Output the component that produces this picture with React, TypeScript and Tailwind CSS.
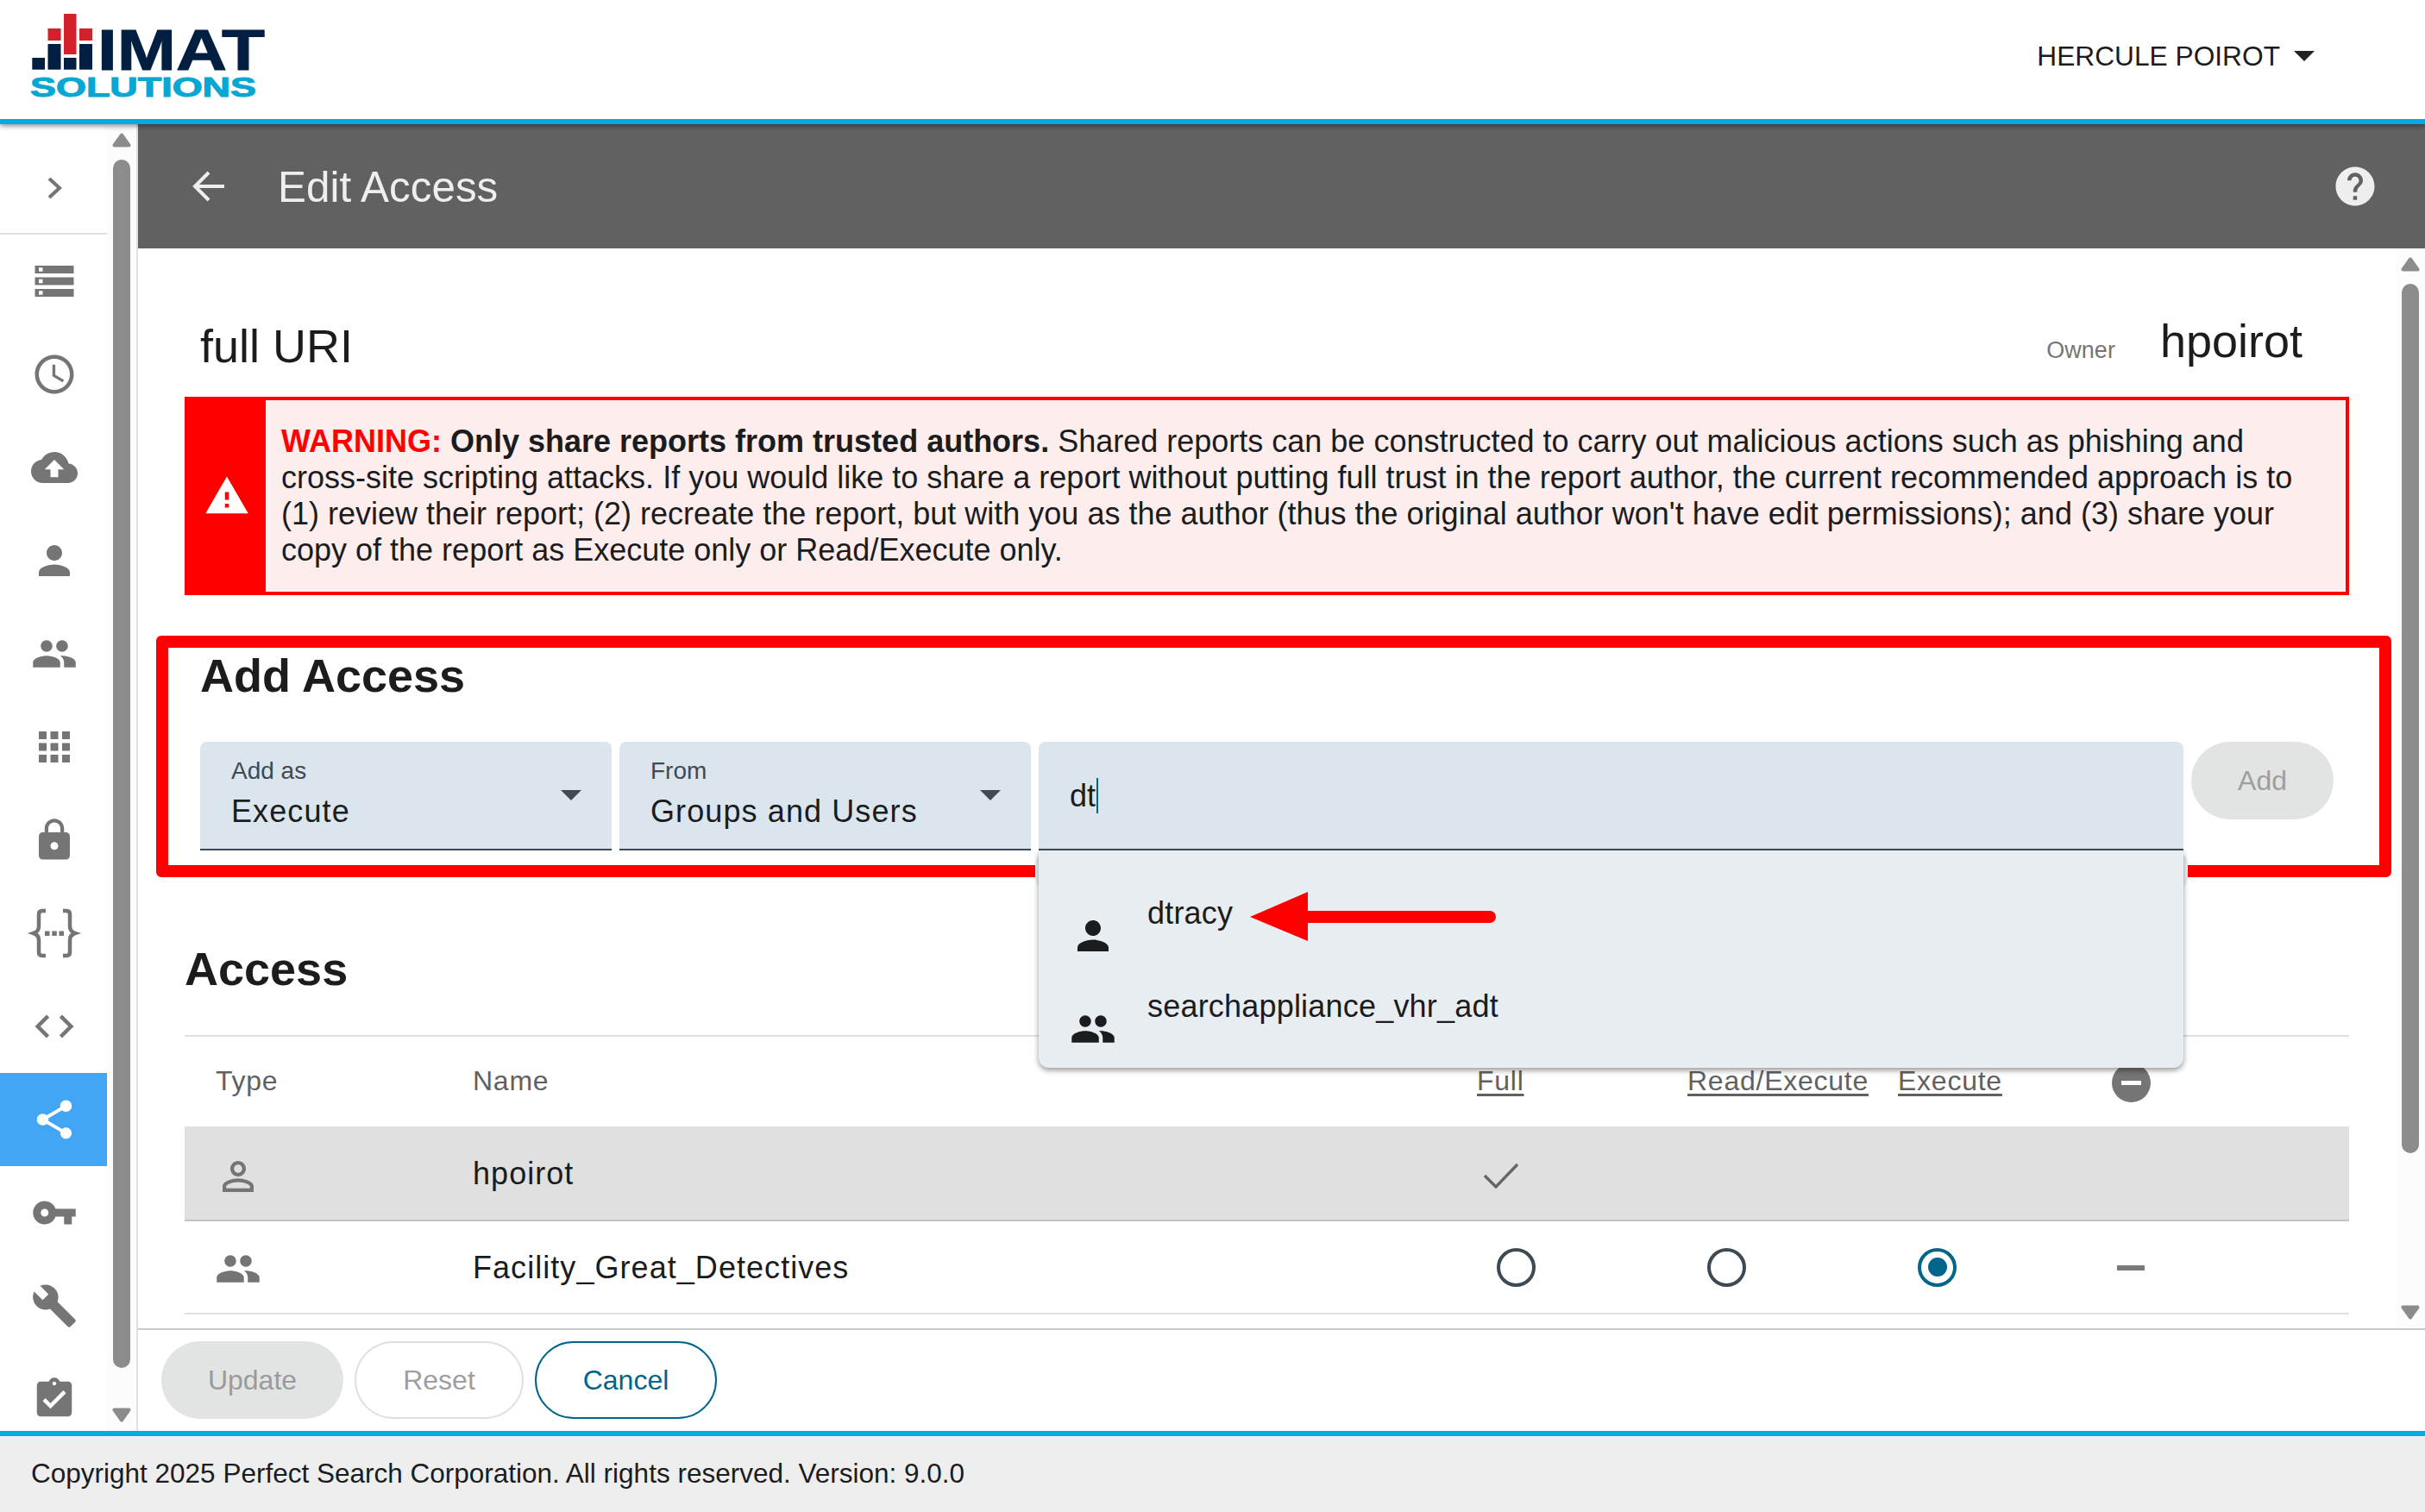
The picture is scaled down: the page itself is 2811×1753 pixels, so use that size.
import React from "react";

const P = {
  storage: "M2 20h20v-4H2v4zm2-3h2v2H4v-2zM2 4v4h20V4H2zm4 3H4V5h2v2zm-4 7h20v-4H2v4zm2-3h2v2H4v-2z",
  clock: "M11.99 2C6.47 2 2 6.48 2 12s4.47 10 9.99 10C17.52 22 22 17.52 22 12S17.52 2 11.99 2zM12 20c-4.42 0-8-3.58-8-8s3.58-8 8-8 8 3.58 8 8-3.58 8-8 8zM12.5 7H11v6l5.25 3.15.75-1.23-4.5-2.67z",
  cloud: "M19.35 10.04C18.67 6.59 15.64 4 12 4 9.11 4 6.6 5.64 5.35 8.04 2.34 8.36 0 10.91 0 14c0 3.31 2.69 6 6 6h13c2.76 0 5-2.24 5-5 0-2.64-2.05-4.78-4.65-4.96zM14 13v4h-4v-4H7l5-5 5 5h-3z",
  person: "M12 12c2.21 0 4-1.79 4-4s-1.79-4-4-4-4 1.79-4 4 1.79 4 4 4zm0 2c-2.67 0-8 1.34-8 4v2h16v-2c0-2.66-5.33-4-8-4z",
  personO: "M12 5.9c1.16 0 2.1.94 2.1 2.1s-.94 2.1-2.1 2.1S9.9 9.16 9.9 8s.94-2.1 2.1-2.1m0 9c2.97 0 6.1 1.46 6.1 2.1v1.1H5.9V17c0-.64 3.13-2.1 6.1-2.1M12 4C9.79 4 8 5.79 8 8s1.79 4 4 4 4-1.79 4-4-1.79-4-4-4zm0 9c-2.67 0-8 1.34-8 4v3h16v-3c0-2.66-5.33-4-8-4z",
  people: "M16 11c1.66 0 2.99-1.34 2.99-3S17.66 5 16 5c-1.66 0-3 1.34-3 3s1.34 3 3 3zm-8 0c1.66 0 2.99-1.34 2.99-3S9.66 5 8 5C6.34 5 5 6.34 5 8s1.34 3 3 3zm0 2c-2.33 0-7 1.17-7 3.5V19h14v-2.5c0-2.33-4.67-3.5-7-3.5zm8 0c-.29 0-.62.02-.97.05 1.16.84 1.97 1.97 1.97 3.45V19h6v-2.5c0-2.33-4.67-3.5-7-3.5z",
  apps: "M4 8h4V4H4v4zm6 12h4v-4h-4v4zm-6 0h4v-4H4v4zm0-6h4v-4H4v4zm6 0h4v-4h-4v4zm6-10v4h4V4h-4zm-6 4h4V4h-4v4zm6 6h4v-4h-4v4zm0 6h4v-4h-4v4z",
  lock: "M18 8h-1V6c0-2.76-2.24-5-5-5S7 3.24 7 6v2H6c-1.1 0-2 .9-2 2v10c0 1.1.9 2 2 2h12c1.1 0 2-.9 2-2V10c0-1.1-.9-2-2-2zm-6 9c-1.1 0-2-.9-2-2s.9-2 2-2 2 .9 2 2-.9 2-2 2zm3.1-9H8.9V6c0-1.71 1.39-3.1 3.1-3.1 1.71 0 3.1 1.39 3.1 3.1v2z",
  code: "M9.4 16.6L4.8 12l4.6-4.6L8 6l-6 6 6 6 1.4-1.4zm5.2 0l4.6-4.6-4.6-4.6L16 6l6 6-6 6-1.4-1.4z",
  share: "M18 16.08c-.76 0-1.44.3-1.96.77L8.91 12.7c.05-.23.09-.46.09-.7s-.04-.47-.09-.7l7.05-4.11c.54.5 1.25.81 2.04.81 1.66 0 3-1.34 3-3s-1.34-3-3-3-3 1.34-3 3c0 .24.04.47.09.7L8.04 9.81C7.5 9.31 6.79 9 6 9c-1.66 0-3 1.34-3 3s1.34 3 3 3c.79 0 1.5-.31 2.04-.81l7.12 4.16c-.05.21-.08.43-.08.65 0 1.61 1.31 2.92 2.92 2.92 1.61 0 2.92-1.31 2.92-2.92s-1.31-2.92-2.92-2.92z",
  key: "M12.65 10C11.83 7.67 9.61 6 7 6c-3.31 0-6 2.69-6 6s2.69 6 6 6c2.61 0 4.83-1.67 5.65-4H17v4h4v-4h2v-4H12.65zM7 14c-1.1 0-2-.9-2-2s.9-2 2-2 2 .9 2 2-.9 2-2 2z",
  build: "M22.7 19l-9.1-9.1c.9-2.3.4-5-1.5-6.9-2-2-5-2.4-7.4-1.3L9 6 6 9 1.6 4.7C.4 7.1.9 10.1 2.9 12.1c1.9 1.9 4.6 2.4 6.9 1.5l9.1 9.1c.4.4 1 .4 1.4 0l2.3-2.3c.5-.4.5-1.1.1-1.4z",
  check: "M19 3h-4.18C14.4 1.84 13.3 1 12 1c-1.3 0-2.4.84-2.82 2H5c-1.1 0-2 .9-2 2v14c0 1.1.9 2 2 2h14c1.1 0 2-.9 2-2V5c0-1.1-.9-2-2-2zm-7 0c.55 0 1 .45 1 1s-.45 1-1 1-1-.45-1-1 .45-1 1-1zm-2 14l-4-4 1.41-1.41L10 14.17l6.59-6.59L18 9l-8 8z",
  help: "M12 2C6.48 2 2 6.48 2 12s4.48 10 10 10 10-4.48 10-10S17.52 2 12 2zm1 17h-2v-2h2v2zm2.07-7.75l-.9.92C13.45 12.9 13 13.5 13 15h-2v-.5c0-1.1.45-2.1 1.17-2.83l1.24-1.26c.37-.36.59-.86.59-1.41 0-1.1-.9-2-2-2s-2 .9-2 2H8c0-2.21 1.79-4 4-4s4 1.79 4 4c0 .88-.36 1.68-.93 2.25z",
  warn: "M1 21h22L12 2 1 21zm12-3h-2v-2h2v2zm0-4h-2v-4h2v4z",
};

function Ic({ d, className = "w-[54px] h-[54px]" }: { d: string; className?: string }) {
  return (
    <svg viewBox="0 0 24 24" className={"block shrink-0 fill-current " + className}>
      <path d={d} />
    </svg>
  );
}

function Braces() {
  return (
    <svg viewBox="0 0 68 68" className="block w-[68px] h-[68px] shrink-0">
      <path
        d="M24 8H20Q16 8 16 12V26Q16 32 10 34Q16 36 16 42V56Q16 60 20 60H24M44 8H48Q52 8 52 12V26Q52 32 58 34Q52 36 52 42V56Q52 60 48 60H44"
        fill="none"
        stroke="currentColor"
        strokeWidth="4.5"
      />
      <path d="M23 31.5h5.5v5.5H23zM31.3 31.5h5.5v5.5h-5.5zM39.5 31.5H45v5.5h-5.5z" fill="currentColor" />
    </svg>
  );
}

function Tri({ down = false }: { down?: boolean }) {
  return (
    <svg viewBox="0 0 22 17" className="block w-[22px] h-[17px] shrink-0">
      <path
        d={down ? "M2.5 2.5h17L11 14.5z" : "M11 2.5L19.5 14.5h-17z"}
        fill="#8c8c8c"
        stroke="#8c8c8c"
        strokeWidth="4"
        strokeLinejoin="round"
      />
    </svg>
  );
}

function Caret({ className }: { className: string }) {
  return (
    <svg viewBox="0 0 24 12" className={"block w-[24px] h-[12px] shrink-0 fill-current " + className}>
      <path d="M0 0h24L12 12z" />
    </svg>
  );
}

function Logo() {
  return (
    <svg viewBox="-3 0 276 108" className="block w-[276px] h-[108px] overflow-visible">
      <rect x="37" y="0" width="14.5" height="47" fill="#d3202a" />
      <rect x="18.5" y="17" width="15" height="14" fill="#d3202a" />
      <rect x="55" y="17" width="15" height="14" fill="#d3202a" />
      <rect x="0.3" y="51" width="14.7" height="13.7" fill="#021e41" />
      <rect x="18.5" y="35" width="15" height="29.7" fill="#021e41" />
      <rect x="37" y="51" width="14.5" height="13.7" fill="#021e41" />
      <rect x="55" y="35" width="15" height="29.7" fill="#021e41" />
      <text x="76" y="64.5" fontFamily="'Liberation Sans',sans-serif" fontWeight="700" fontSize="67" textLength="194" lengthAdjust="spacingAndGlyphs" fill="#021e41" stroke="#021e41" strokeWidth="1">IMAT</text>
      <text x="-2" y="95.5" fontFamily="'Liberation Sans',sans-serif" fontWeight="700" fontSize="31" textLength="262" lengthAdjust="spacingAndGlyphs" fill="#08a7d3" stroke="#08a7d3" strokeWidth="1">SOLUTIONS</text>
    </svg>
  );
}

const NAV = [P.storage, P.clock, P.cloud, P.person, P.people, P.apps, P.lock, "", P.code, P.share, P.key, P.build, P.check];

function Select({ label, value }: { label: string; value: string }) {
  return (
    <div className="w-[477px] h-[126px] shrink-0 flex justify-between bg-[#dbe5ed] rounded-t-[8px] border-b-2 border-[#3d4a54] pl-[36px] pr-[35px]">
      <div className="pt-[18px]">
        <div className="text-[28px] leading-[32px] text-[#3f4a53]">{label}</div>
        <div className="mt-[10px] text-[36px] leading-[42px] tracking-[1.1px] text-[#1a1c1e]">{value}</div>
      </div>
      <Caret className="self-center text-[#3f4a53]" />
    </div>
  );
}

function Radio({ on = false }: { on?: boolean }) {
  return (
    <div className={"ml-[22px] w-[45px] h-[45px] rounded-full border-[4px] flex items-center justify-center " + (on ? "border-[#00658b]" : "border-[#3d4a54]")}>
      {on && <div className="w-[22px] h-[22px] rounded-full bg-[#00658b]" />}
    </div>
  );
}

export default function App() {
  return (
    <div className="relative w-[2811px] h-[1753px] overflow-hidden flex flex-col bg-white font-['Liberation_Sans',Arial,sans-serif] text-[#1a1c1e]">
      <header className="relative z-10 h-[144px] shrink-0 flex items-center justify-between bg-white border-b-[6px] border-[#00ace0] shadow-[0_2px_6px_rgba(0,0,0,0.45)] pl-[34px] pr-[128px]">
        <div className="self-start mt-[16px]"><Logo /></div>
        <div className="flex items-center gap-[16px] pb-[8px]">
          <span className="text-[31.7px] leading-[38px]">HERCULE POIROT</span>
          <Caret className="text-[#1f2326]" />
        </div>
      </header>

      <div className="flex-1 min-h-0 flex">
        <aside className="w-[160px] shrink-0 flex border-r-2 border-[#e0e0e0]">
          <nav className="w-[124px] shrink-0 overflow-hidden">
            <div className="h-[128px] border-b-2 border-[#e0e0e0] flex justify-center pl-[2px] pt-[61px] text-[#757575]">
              <svg viewBox="0 0 17 26" className="block w-[17px] h-[26px]">
                <path d="M2 2l12 11L2 24" fill="none" stroke="currentColor" strokeWidth="4.2" />
              </svg>
            </div>
            {NAV.map((d, i) => (
              <div key={i} className={"h-[108px] flex items-center justify-center pl-[2px] " + (i === 9 ? "bg-[#42a5f5] text-white" : "text-[#757575]")}>
                {i === 7 ? <Braces /> : <Ic d={d} />}
              </div>
            ))}
          </nav>
          <div className="flex-1 bg-[#fcfcfc] flex flex-col items-center pt-[10px]">
            <Tri />
            <div className="mt-[14px] w-[20px] h-[1401px] rounded-full bg-[#8c8c8c] shrink-0" />
            <div className="mt-[46px]"><Tri down /></div>
          </div>
        </aside>

        <main className="flex-1 min-w-0 flex flex-col">
          <div className="h-[144px] shrink-0 bg-[#616161] flex items-center justify-between pl-[63px] pr-[54px] text-[#eeeeee]">
            <div className="flex items-center">
              <svg viewBox="0 0 38 36" className="block w-[38px] h-[36px]">
                <path d="M37 18H4M19 2L3 18l16 16" fill="none" stroke="currentColor" strokeWidth="4" />
              </svg>
              <span className="ml-[61px] pt-[2px] text-[49.4px] leading-[56px]">Edit Access</span>
            </div>
            <Ic d={P.help} />
          </div>

          <div className="flex-1 min-h-0 flex">
            <div className="flex-1 min-w-0 overflow-hidden px-[54px]">
              <div className="h-[172px] flex justify-between pl-[18px]">
                <div className="mt-[86px] text-[54px] leading-none">full URI</div>
                <div className="flex">
                  <div className="mt-[105px] text-[27px] leading-none text-[#757575]">Owner</div>
                  <div className="ml-[52px] mr-[54px] mt-[80px] text-[54px] leading-none">hpoirot</div>
                </div>
              </div>

              <div className="h-[230px] flex border-[4px] border-[#ff0000] bg-[#fdeded]">
                <div className="w-[90px] shrink-0 bg-[#ff0000] flex items-center justify-center text-white">
                  <Ic d={P.warn} />
                </div>
                <div className="pl-[18px] pt-[27px] text-[36px] leading-[42px] whitespace-nowrap">
                  <div><b className="text-[#ff0000]">WARNING:</b> <b>Only share reports from trusted authors.</b> Shared reports can be constructed to carry out malicious actions such as phishing and</div>
                  <div>cross-site scripting attacks. If you would like to share a report without putting full trust in the report author, the current recommended approach is to</div>
                  <div>(1) review their report; (2) recreate the report, but with you as the author (thus the original author won't have edit permissions); and (3) share your</div>
                  <div>copy of the report as Execute only or Read/Execute only.</div>
                </div>
              </div>

              <section className="px-[18px]">
                <h2 className="mt-[66px] mb-[50px] text-[54px] leading-none font-bold">Add Access</h2>
                <div className="flex gap-[9px]">
                  <Select label="Add as" value="Execute" />
                  <Select label="From" value="Groups and Users" />
                  <div className="flex-1 h-[126px] flex items-center bg-[#dbe5ed] rounded-t-[8px] border-b-2 border-[#3d4a54] pl-[36px]">
                    <span className="pt-[2px] text-[36px] leading-[42px]">dt</span>
                    <span className="ml-[1px] w-[2px] h-[41px] bg-[#00658b]" />
                  </div>
                  <div className="w-[165px] h-[90px] shrink-0 rounded-full bg-[#e2e4e4] flex items-center justify-center text-[32px] text-[#9e9e9e]">Add</div>
                </div>
              </section>

              <h2 className="mt-[110px] mb-[50px] text-[54px] leading-none font-bold">Access</h2>

              <div className="border-t-2 border-[#e0e0e0] grid grid-cols-[334px_1164px_244px_244px_244px_1fr] h-[106px] items-center pb-[2px] text-[32px] text-[#616161] tracking-[0.75px]">
                <div className="pl-[36px]">Type</div>
                <div>Name</div>
                <div className="underline underline-offset-[4px]">Full</div>
                <div className="underline underline-offset-[4px]">Read/Execute</div>
                <div className="underline underline-offset-[4px]">Execute</div>
                <div className="pl-[4px] pt-[4px]">
                  <div className="w-[45px] h-[45px] rounded-full bg-[#757575] flex items-center justify-center">
                    <div className="w-[23px] h-[5px] bg-white" />
                  </div>
                </div>
              </div>

              <div className="grid grid-cols-[334px_1165px_244px_244px_244px_1fr] h-[110px] items-center bg-[#e0e0e0] border-b-2 border-[#c4c4c4] text-[36px] tracking-[1.05px]">
                <div className="pl-[35px] pt-[8px] text-[#757575]"><Ic d={P.personO} /></div>
                <div className="pt-[2px]">hpoirot</div>
                <div className="pl-[7px] pt-[6px]">
                  <svg viewBox="0 0 40 30" className="block w-[40px] h-[30px]">
                    <path d="M1 15l13 13L39 2" fill="none" stroke="#666666" strokeWidth="3.4" />
                  </svg>
                </div>
              </div>

              <div className="grid grid-cols-[334px_1165px_244px_244px_244px_1fr] h-[108px] items-center border-b-2 border-[#e0e0e0] text-[36px] tracking-[1.05px]">
                <div className="pl-[35px] pt-[4px] text-[#757575]"><Ic d={P.people} /></div>
                <div className="pt-[2px]">Facility_Great_Detectives</div>
                <Radio />
                <Radio />
                <Radio on />
                <div className="pl-[9px] pt-[2px]"><div className="w-[32px] h-[6px] bg-[#7a7a7a]" /></div>
              </div>
            </div>

            <div className="w-[34px] shrink-0 bg-[#fcfcfc] flex flex-col items-center pt-[10px]">
              <Tri />
              <div className="mt-[14px] w-[20px] h-[1008px] rounded-full bg-[#8c8c8c] shrink-0" />
              <div className="mt-[176px]"><Tri down /></div>
            </div>
          </div>

          <div className="h-[119px] shrink-0 border-t-2 border-[#c8c8c8] flex items-start gap-[13px] pl-[27px] pt-[13px] text-[32px]">
            <div className="w-[211px] h-[90px] rounded-full bg-[#e2e4e4] flex items-center justify-center text-[#9a9a9a]">Update</div>
            <div className="w-[196px] h-[90px] rounded-full border-2 border-[#e0e0e0] flex items-center justify-center text-[#9e9e9e]">Reset</div>
            <div className="w-[211px] h-[90px] rounded-full border-2 border-[#00658b] flex items-center justify-center text-[#00658b]">Cancel</div>
          </div>
        </main>
      </div>

      <footer className="h-[94px] shrink-0 bg-[#eeeeee] border-t-[6px] border-[#00ace0] flex items-center pl-[36px] text-[31.5px]">
        Copyright 2025 Perfect Search Corporation. All rights reserved. Version: 9.0.0
      </footer>

      {/* annotation frame drawn over the page */}
      <div className="absolute z-20 left-[181px] top-[737px] w-[2591px] h-[280px] border-[14px] border-[#ff0000] rounded-[6px] pointer-events-none" />

      {/* open autocomplete menu */}
      <div className="absolute z-30 left-[1200px] top-[988px] w-[1336px] h-[44px] rounded-[14px] bg-[#edf1f4]" />
      <div className="absolute z-30 left-[1204px] top-[986px] w-[1327px] h-[252px] pt-[36px] bg-[#e8edf2] rounded-b-[12px] shadow-[0_3px_6px_rgba(0,0,0,0.4)]">
        <div className="h-[108px] flex items-start pl-[36px]">
          <div className="mt-[36px]"><Ic d={P.person} /></div>
          <div className="ml-[36px] mt-[16px] text-[36px] leading-[42px] tracking-[0.2px]">dtracy</div>
        </div>
        <div className="h-[108px] flex items-start pl-[36px]">
          <div className="mt-[36px]"><Ic d={P.people} /></div>
          <div className="ml-[36px] mt-[16px] text-[36px] leading-[42px] tracking-[0.2px]">searchappliance_vhr_adt</div>
        </div>
      </div>

      {/* annotation arrow */}
      <svg viewBox="0 0 285 57" className="absolute z-40 left-[1449px] top-[1034px] w-[285px] h-[57px]">
        <path d="M0 29L67 0v22h211a7 7 0 0 1 0 14H67v21z" fill="#ff0000" />
      </svg>
    </div>
  );
}
